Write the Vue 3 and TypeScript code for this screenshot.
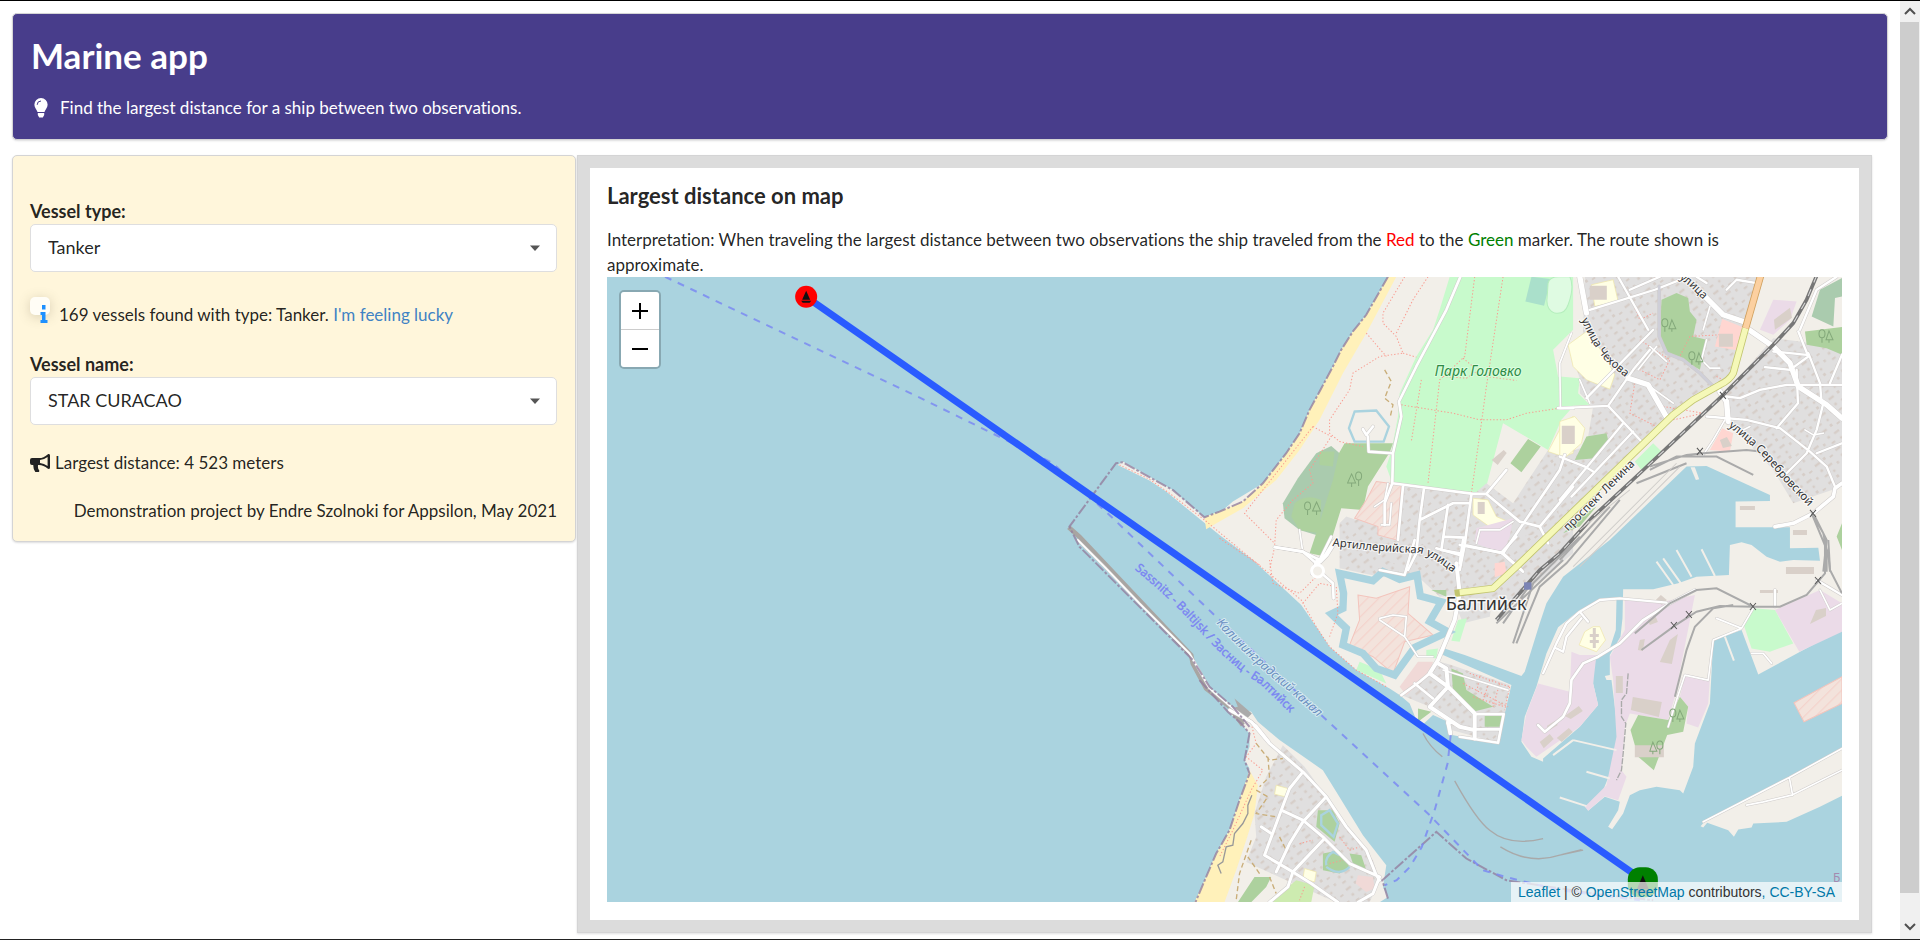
<script setup lang="ts">
import { ref } from 'vue'

type Frame = 'a' | 'b' | 'c' | 'd' | 'e'
interface Shape { f: Frame; k: string; d: string }
interface Road { f: Frame; w: number; d: string; k?: string }
interface Label { id: string; f: Frame; k: string; d: string; text: string }

const vesselTypes = ['Tanker', 'Cargo', 'Fishing', 'Passenger']
const vesselNames = ['STAR CURACAO', 'STAR MARIA', 'SUNNY STAR']
const vesselType = ref('Tanker')
const vesselName = ref('STAR CURACAO')

// Map sheets: each one is digitised at three units per pixel from its own origin.
const origin: Record<Frame, [number, number]> = {
  a: [1220, 270], b: [1560, 270], c: [1040, 440], d: [1380, 540], e: [1180, 680],
}
const place = (f: Frame): string => `translate(${origin[f][0]} ${origin[f][1]}) scale(0.33333)`

const areas: Shape[] = [
  { f: 'd', k: 'land', d: 'M25-789L-40-675-80-625-115-570-140-520-180-445-210-390-240-320-280-260-350-170-390-145-440-115-475-85-525-68-620-150-690-190-770-235-785-225-690-178-640-145-530-55-480-15-380 60-235 195-190 260-150 320-70 390 30 445 60 465 90 490 110 540 125 558 160 525 205 545 210 583 355 612 375 520 395 435 190 345 185 322 255 345 425 408 435 395 480 250 500 190 550 110 690 0 920-220 980-222 1170-135 1170-117 1067-115 1067-38 1230-38 1230 25 1315 23 1320 62 1240 60 1200 65 1160 50 1115 15 1085 7 1050 15 1047 105 950 110 895 130 820 148 730 148 728 235 722 290 690 345 690 405 675 408 680 420 695 420 715 580 690 700 670 750 620 800 625 812 675 770 720 785 715 810 685 860 697 867 730 820 750 765 780 750 830 740 900 750 910 760 940 680 945 610 990 490 1000 300 1085 270 1135 403 1390 265 1390-800Z' },
  { f: 'd', k: 'land', d: 'M728 175L660 180 600 210 535 262 500 340 470 440 435 530 425 605 455 650 490 665 490 655 600 560 655 495 640 430 640 360 690 325 708 270 710 180Z' },
  { f: 'd', k: 'land', d: 'M1390 625L1228 712 980 838 962 858 970 862 982 848 1045 870 1062 890 1075 868 1115 862 1120 850 1220 845 1320 800 1390 765Z' },
  { f: 'e', k: 'land', d: 'M215 95L235 125 300 180 430 270 470 335 550 465 620 555 610 620 625 650 600 666 45 666 80 590 110 520 150 450 180 360 205 290 210 265 195 240 210 200 210 160 185 130 145 95 160 80Z' },
  { f: 'a', k: 'beach', d: 'M505 21L440 135 400 185 365 240 340 290 300 365 270 420 240 490 200 550 130 640 70 695 40 708-45 742-40 778 0 755 70 715 170 630 240 540 300 450 370 310 440 190 530 21Z' },
  { f: 'e', k: 'beach', d: 'M210 270L235 315 225 400 200 480 170 570 135 666 45 666 80 590 110 520 150 450 180 360Z' },
  { f: 'a', k: 'park', d: 'M690 21L660 120 640 180 590 260 540 370 535 440 515 545 500 590 518 640 755 672 795 668 850 460 985 540 1025 450 1060 410 1060 360 1015 320 1000 240 1060 180 1060 21Z' },
  { f: 'b', k: 'park', d: 'M0 320L60 325 55 370 90 405 0 410ZM225 575L280 520 305 545 245 600Z' },
  { f: 'a', k: 'mint', d: 'M935 21L993 28 973 108 917 95Z' },
  { f: 'a', k: 'pitch', d: 'M985 40Q990 20 1020 21L1050 21Q1065 50 1045 105Q1035 135 1005 130Q978 120 982 85Z' },
  { f: 'a', k: 'scrub', d: 'M335 528L360 550 355 600 290 795 240 780 195 745 190 700 235 625 290 550Z' },
  { f: 'a', k: 'wood', d: 'M375 520L520 520 510 548 445 650 430 720 365 715 320 860 270 850 290 790 340 630 358 550ZM300 545L345 545 340 590 300 585ZM225 700Q260 670 305 690L300 790 240 780 215 740ZM925 507L963 530 905 607 872 580Z' },
  { f: 'a', k: 'town', d: 'M545 645L760 675 800 640 880 700 985 540 1060 560 1060 850 1000 900 860 1010 700 985 610 930 480 920 360 895 360 760 380 740 410 750Z' },
  { f: 'b', k: 'town', d: 'M75 21L600 21 545 200 520 320 420 370 0 770-20 560 80 530 100 410 60 370 60 325 30 240 70 190ZM640 205L720 215 846 240 846 650 700 700 640 600 500 450 495 370Z' },
  { f: 'd', k: 'town', d: 'M70 20L520-20 350 170 240 165 180 170 110 105 20 60ZM230 200L340 170 330 230 250 250Z' },
  { f: 'd', k: 'town', d: 'M180 365L215 375 390 435 375 520 355 608 215 570 205 540 150 500 65 465 110 420Z' },
  { f: 'e', k: 'town', d: 'M310 195L375 260 440 350 500 440 580 540 600 600 570 666 470 666 320 600 200 545 230 470 225 400 260 290Z' },
  { f: 'a', k: 'hatch', d: 'M470 635L545 645 530 810 475 795 475 770 405 745 440 690Z' },
  { f: 'a', k: 'school', d: 'M760 685L805 690 830 740 865 755 830 785 760 735ZM1060 440L1030 460 985 545 1030 560 1060 550Z' },
  { f: 'b', k: 'school', d: 'M95 45L160 30 175 95 105 110ZM80 185L25 225 40 290 80 330 150 358 165 315 130 250ZM0 455L45 440 75 475 65 520 20 560 0 560Z' },
  { f: 'e', k: 'school', d: 'M290 315L325 325 318 350 285 342ZM375 565L410 575 405 605 370 595Z' },
  { f: 'b', k: 'retail', d: 'M487 148L555 175 535 242 465 230ZM487 475L520 490 510 545 450 540Z' },
  { f: 'd', k: 'retail', d: 'M345 70L375 65 380 100 345 112Z' },
  { f: 'b', k: 'industry', d: 'M640 90L710 95 690 150 640 195 600 180Z' },
  { f: 'a', k: 'industry', d: 'M770 775L880 745 870 800 850 850 765 820Z' },
  { f: 'b', k: 'wood', d: 'M350 70L385 85 390 125 410 150 400 200 440 210 420 300 370 270 320 245 300 200 305 90ZM735 185L846 172 846 255 800 235 740 225ZM80 500L140 490 145 510 105 565 45 570ZM846 760L830 800 846 840ZM60 740L110 710 60 770 10 790Z' },
  { f: 'b', k: 'scrub', d: 'M846 25L780 60 755 140 820 170 825 85 846 80Z' },
  { f: 'd', k: 'industry', d: 'M475 430L570 455 575 335 600 345 650 345 640 430 655 495 600 560 470 650 440 620 425 600 440 520ZM735 180L850 185 945 165 885 470 865 540 750 520 735 560 725 690 740 710 715 780 675 768 625 812 615 800 680 735 710 590 700 420 690 350 735 270ZM915 410L990 415 985 490 955 562 920 550 925 500 900 470ZM1185 210L1320 150 1386 190 1386 275 1258 335Z' },
  { f: 'd', k: 'park', d: 'M1120 205L1185 210 1240 310 1170 335 1115 325 1090 250ZM235 240L262 235 240 305 215 302ZM140 330L175 325 170 355 140 350ZM-60 365L0 390 20 430-70 390Z' },
  { f: 'd', k: 'school', d: 'M640 260L660 260 677 300 650 335 598 315 615 275Z' },
  { f: 'd', k: 'wood', d: 'M775 525L865 540 900 470 925 500 910 575 862 585 822 690 775 650 752 570ZM215 385L250 400 260 450 340 500 280 515 220 450ZM315 525L370 525 365 560 315 560ZM115 505L155 515 115 545ZM155 150L200 150 200 170Z' },
  { f: 'd', k: 'hatch', d: 'M1386 410L1242 488 1272 545 1386 490Z' },
  { f: 'd', k: 'rosy', d: 'M60 440L115 365 160 365 150 405 80 465Z' },
  { f: 'e', k: 'wood', d: 'M415 390L460 390 480 430 465 485 410 440ZM225 590L275 590 260 620 215 666 175 666ZM510 520L545 525 560 570 520 550ZM430 520L480 510 510 560 480 580 430 570Z' },
  { f: 'e', k: 'meadow', d: 'M350 600L405 615 395 666 270 666Z' },
  { f: 'e', k: 'rosy', d: 'M535 585L580 590 585 625 560 635 528 610Z' },
  { f: 'e', k: 'rock', d: 'M165 55L217 100 190 128 145 85 175 80Z' },
  { f: 'd', k: 'hatch', d: 'M-65 165L-10 175 90 140 85 220 160 285 75 305 40 400-20 350-90 315-60 240Z' },
]

const waters: Shape[] = [
  { f: 'd', k: 'moat', d: 'M-120 100L-20 122 10 95 60 118 112 105 122 168 185 185 150 245 205 275 105 322 45 405-10 385-50 340-110 315-100 265-145 222-110 205-108 160Z' },
  { f: 'a', k: 'stream', d: 'M405 425L470 422 508 470 492 515 405 515 388 475Z' },
  { f: 'e', k: 'stream', d: 'M425 405L450 390 475 430 462 470 425 435ZM440 555Q435 530 460 515L480 525M440 560Q480 590 510 560' },
  { f: 'b', k: 'jetty', d: 'M392 592L405 592 418 628 408 630Z' },
]

const roads: Road[] = [
  { f: 'a', w: 8, d: 'M722 21L680 120 590 290 538 395 545 440 520 550 518 640 760 672 800 672 900 755 960 770 985 820M518 550L447 545 445 500M430 478L440 495 460 470M518 640L495 700 495 765M800 672L860 600M550 650L535 810M613 655L600 750 590 850 565 900M600 750L700 700 750 700M685 705L665 840 720 850M755 675L735 825 720 900M672 800L735 803M735 825L850 850 905 900M850 850L1020 600 1035 555M960 770L1060 650M165 832L250 845 300 870 335 800M1015 415L1060 415' },
  { f: 'a', w: 14, d: 'M300 875L320 855 345 815M295 870L280 910' },
  { f: 'a', w: 5, d: 'M465 710L495 690 505 640M485 765L510 765 515 700M240 780L248 835M770 820L780 780 840 780 880 755M1022 415L1020 280 1055 190' },
  { f: 'b', w: 7, d: 'M0 415L145 408 220 300 270 240M90 120L285 60 385 21M175 21L265 180M300 21L210 60M280 180L80 385M145 408L250 520M190 460L0 690M220 485L35 680M410 21L440 40M500 60L530 30 590 40M500 380L540 385 600 360 680 345 846 345M640 245L740 255M615 292L690 300 745 260 715 185M710 300L714 400 650 475M440 440L560 450 660 475 750 545M770 550L846 520M790 400L770 480 740 550 680 610M750 545L800 590 825 650M720 180L770 60 830 21M745 250L780 340 785 400M846 255L810 340M75 590L100 605M0 560L75 590' },
  { f: 'b', w: 16, d: 'M60 21L80 130M205 325L265 345 325 450M435 80L490 135 550 155 M560 175L640 230 690 280 715 350 800 405 846 445M480 365L500 395 505 455' },
  { f: 'b', w: 11, d: 'M846 640L825 655 820 680 760 730 700 760 645 770' },
  { f: 'b', w: 8, k: 'grey', d: 'M298 50L298 200 320 250 370 270 420 310 460 350' },
  { f: 'b', w: 5, d: 'M450 110L430 180M440 210L425 270 450 295 480 295M495 450L460 510 430 555M270 230L320 275M235 300L290 230M90 400L60 330M270 350L340 400M530 490L570 470M735 480L760 495 790 490' },
  { f: 'd', w: 12, d: 'M230 70L240 160 225 240 175 360 150 400 205 440 150 500 M150 500L240 560 285 570M175 370L200 385 205 440 285 520 285 595M205 545L212 580M215 545L205 550' },
  { f: 'd', w: 8, d: 'M285 522L372 522 355 608 240 590M285 568L360 568M65 465L120 425 150 400M105 430L160 475M0 90L75 105 105 0M170 25L240 45 M250 0L240 70M240 15L365 38 430 95M365 38L410-10' },
  { f: 'd', w: 7, d: 'M490 400L530 310 560 250 600 215 660 180 720 175 860 188M530 325L550 335 560 290 605 235 M600 215L625 245M1310 120L1386 165M1185 200L1185 150' },
  { f: 'd', w: 8, d: 'M475 555L495 575 550 530 570 490 575 420 610 370 655 350 720 310 790 240 870 190 945 150' },
  { f: 'd', w: 5, d: 'M865 560L890 480 915 405 985 420 1000 300 1085 265 1010 235M1115 340L1150 340 1175 370M1085 265L1120 205M1320 150L1350 210 1386 190M1386 625L1228 712 970 845M1100 795L1150 785 1235 765 1386 690M1228 712L1238 765M0 235L40 225 80 230 75 290 0 240M75 290L115 350 160 350M190 390L385 450' },
  { f: 'e', w: 9, d: 'M150 90L215 125 270 190 370 275 440 350 500 440 560 510 590 585 600 600M370 275L330 325 305 390 255 525 340 575 395 610 475 666M440 350L370 425 330 490 290 575M305 390L370 420 430 470 510 550 600 590M430 480L340 575 325 620 270 666M245 440L275 460M600 590L580 640 535 666' },
  { f: 'c', w: 8, d: 'M835 390L880 430 882 475M710 322L790 335 830 370' },
  { f: 'c', w: 5, d: 'M115 300L200 385 300 490 450 640 510 745 580 805 650 855 690 905' },
]

const buildings = [
  'M1590 286h17v14h-17ZM1719 334h14v13h-14ZM1562 426h13v18h-13ZM1635 745h29v12h-29Z',
  'M1670 640L1678 634 1672 664 1660 662ZM1633 697L1662 702 1659 717 1631 710ZM1786 567h28v7h-28ZM1816 610L1826 608 1826 616 1810 624ZM1593 628h3v20h-3ZM1590 634h9v3h-9ZM1590 640h9v3h-9Z',
  'M1720 440L1727 437 1732 446 1723 448ZM1774 320L1790 308 1792 318 1775 330ZM1478 502h7v12h-7ZM1492 460L1504 450 1507 453 1498 465ZM1616 676h7v17h-7ZM1740 506h15v4h-15ZM1793 530h14v5h-14ZM1540 742l10-8 4 5-10 9ZM1557 738l12-10 4 4-11 10ZM1565 716l14-10 4 5-12 8ZM1547 726l8-5 3 4-8 5ZM1656 600l5-5 6 5-5 5ZM1648 620l8-3 2 5-8 3ZM1640 640l5-1-2 12-5-1ZM1760 590h18v3h-18Z',
].join('')

const ticks = [
  'M1697 448l6 7m0-7l-6 7', 'M1720 392l6 7m0-7l-6 7', 'M1810 510l6 7m0-7l-6 7', 'M1815 577l6 7m0-7l-6 7',
  'M1750 603l6 7m0-7l-6 7', 'M1686 611l6 7m0-7l-6 7', 'M1671 622l6 7m0-7l-6 7',
].join('')

const woods = [
  'M1348 483l4-9 4 9ZM1352 483v4M1359 476m-3 0a3 4 0 1 0 6 0a3 4 0 1 0-6 0M1359 480v6',
  'M1313 511l4-9 4 9ZM1317 511v4M1308 506m-3 0a3 4 0 1 0 6 0a3 4 0 1 0-6 0M1308 510v5',
  'M1669 329l3-9 4 9ZM1672 329v3M1665 323m-3 0a3 4 0 1 0 6 0a3 4 0 1 0-6 0M1665 327v5',
  'M1696 362l3-9 4 9ZM1699 362v3M1692 356m-3 0a3 4 0 1 0 6 0a3 4 0 1 0-6 0M1692 360v5',
  'M1826 340l3-9 4 9ZM1829 340v3M1822 334m-3 0a3 4 0 1 0 6 0a3 4 0 1 0-6 0M1822 338v5',
  'M1650 751l3-9 4 9ZM1653 751v3M1660 745m-3 0a3 4 0 1 0 6 0a3 4 0 1 0-6 0M1660 749v5',
  'M1677 719l3-9 4 9ZM1680 719v3M1673 713m-3 0a3 4 0 1 0 6 0a3 4 0 1 0-6 0M1673 717v5',
].join('')

const labels: Label[] = [
  { id: 'p1', f: 'a', k: 'street', d: 'M338 828Q470 845 600 850Q650 862 730 935', text: 'Артиллерийская улица' },
  { id: 'p2', f: 'b', k: 'street', d: 'M64 150Q110 250 145 280L230 350', text: 'улица Чехова' },
  { id: 'p3', f: 'b', k: 'street', d: 'M358 26L390 50 450 110', text: 'улица' },
  { id: 'p4', f: 'b', k: 'street', d: 'M25 785L260 550', text: 'проспект Ленина' },
  { id: 'p5', f: 'b', k: 'street', d: 'M505 470Q600 540 660 620L780 745', text: 'улица Серебровской' },
  { id: 'p6', f: 'c', k: 'ferry-name', d: 'M285 388Q400 480 500 595Q590 690 660 730L830 895', text: 'Sassnitz - Baltijsk / Засниц - Балтийск' },
  { id: 'p7', f: 'c', k: 'canal-name', d: 'M530 550Q640 670 750 755L900 890', text: 'Калининградский канал' },
]
</script>

<template>
  <div class="window">
    <div class="page">
      <header class="banner">
        <h1>Marine app</h1>
        <p class="tagline">
          <svg class="bulb" viewBox="0 0 14 20" aria-hidden="true">
            <path d="M7 0a6.6 6.6 0 0 0-6.6 6.7c0 3 2.3 4.600 3.100 7.300h7c.8-2.700 3.100-4.300 3.100-7.300A6.600 6.600 0 0 0 7 0ZM3.800 15h6.400v2L8.800 19.400H5.200L3.800 17Z" />
            <path class="glint" d="M3.200 6.800A3.800 3.800 0 0 1 7 3" />
          </svg>
          <span>Find the largest distance for a ship between two observations.</span>
        </p>
      </header>

      <main class="columns">
        <form class="sidebar" @submit.prevent>
          <div class="field">
            <label for="type">Vessel type:</label>
            <div class="picker">
              <select id="type" v-model="vesselType">
                <option v-for="t in vesselTypes" :key="t">{{ t }}</option>
              </select>
              <svg class="caret" viewBox="0 0 10 6" aria-hidden="true"><path d="M0 .5h10L5 6Z" /></svg>
            </div>
          </div>

          <p class="found">
            <span class="info">
              <svg viewBox="0 0 8 18" aria-hidden="true"><path d="M2 0h3.500v4.500H2ZM.5 7h5v8H7.500v3H.5v-3H2v-5H.5Z" /></svg>
            </span>
            <span>169 vessels found with type: Tanker. <a href="#">I'm feeling lucky</a></span>
          </p>

          <div class="field">
            <label for="name">Vessel name:</label>
            <div class="picker">
              <select id="name" v-model="vesselName">
                <option v-for="n in vesselNames" :key="n">{{ n }}</option>
              </select>
              <svg class="caret" viewBox="0 0 10 6" aria-hidden="true"><path d="M0 .5h10L5 6Z" /></svg>
            </div>
          </div>

          <p class="distance">
            <svg class="horn" viewBox="0 0 20 18" aria-hidden="true">
              <path fill-rule="evenodd" d="M19 0q-.8-.2-1.400.400-4 3.600-8.600 3.600H2Q0 4 0 6v3q0 2 2 2h1.300q-.2 4 2 7h3.400q1-.8.400-1.800-1.600-2-1-5.200h.9q4.600 0 8.600 3.600.6.600 1.400.400 1-.2 1-1.400V9.200q1-.600 1-1.700t-1-1.700V1.400Q20 .2 19 0ZM17.600 3v9q-3.600-2.700-7.600-3.100V6.100q4-.4 7.600-3.100Z" />
            </svg>
            <span>Largest distance: 4 523 meters</span>
          </p>
          <p class="credit">Demonstration project by Endre Szolnoki for Appsilon, May 2021</p>
        </form>

        <section class="panel">
          <div class="sheet">
            <h2>Largest distance on map</h2>
            <p class="note">
              Interpretation: When traveling the largest distance between two observations the ship traveled from the
              <span class="red">Red</span> to the <span class="green">Green</span> marker. The route shown is approximate.
            </p>

            <div class="map">
              <svg class="chart" viewBox="608 277 1234 625" preserveAspectRatio="xMidYMid slice" role="img" aria-label="Route map">
                <defs>
                  <pattern id="houses" width="78" height="66" patternUnits="userSpaceOnUse" patternTransform="rotate(-38)">
                    <rect width="78" height="66" fill="#e0dfdf" />
                    <path d="M6 8h18v7H6ZM38 6h8v8H38ZM58 14h11v6H58ZM10 30h8v8H10ZM34 32h18v7H34ZM64 40h7v8h-7ZM10 52h12v6H10ZM40 54h7v7h-7Z" fill="#d6cdc7" />
                  </pattern>
                  <pattern id="stripes" width="24" height="24" patternUnits="userSpaceOnUse" patternTransform="rotate(45)">
                    <rect width="24" height="24" fill="#f3e3dc" />
                    <path d="M2 0v24" stroke="#f5d0c9" stroke-width="3" />
                  </pattern>
                  <path v-for="l in labels" :id="l.id" :key="l.id" :d="l.d" />
                </defs>

                <rect x="0" y="0" width="2600" height="1200" fill="#aad3df" />
                <path v-for="(s, i) in areas" :key="`s${i}`" :class="s.k" :d="s.d" :transform="place(s.f)" />
                <path v-for="(s, i) in waters" :key="`w${i}`" :class="s.k" :d="s.d" :transform="place(s.f)" />

                <path class="tracks" :transform="place('a')" d="M555 21L490 130 490 160 530 200 550 250 480 260 400 310 390 360 330 450 330 490 360 515 430 530M625 21L580 90 530 190M440 190L500 260M550 250L590 262M765 21L735 260 660 330 625 640M850 21L800 350 785 460 755 670M545 405L700 430 780 450 860 450 920 430 1020 415M605 330L575 515M670 320L740 325 780 300M800 320L890 332M730 265L760 290M280 470L75 730 165 820M280 470L335 500 270 600 280 640 220 690 170 750 165 832 150 900M0 805L120 885" />
                <path class="tracks" :transform="place('c')" d="M240 75L330 118 390 160 495 240 640 360 785 480 830 560 870 620 950 690 1040 740M690 360L700 430 780 460 840 400M790 490L840 430 890 440 895 520 870 590" />
                <path class="tracks" :transform="place('b')" d="M205 70L240 150 280 130M240 210L330 270 300 330 240 300M225 340L210 430 290 470M310 410L430 430 340 450M480 195L390 200 360 260M240 50L290 21M470 320L490 330" />
                <path class="tracks" :transform="place('d')" d="M0 240L75 290M250 430L385 500M270 400L390 440M280 470L375 500M330 420L310 480M360 430L340 500M390 440L375 510M300 410L290 460" />
                <path class="tracks" :transform="place('e')" d="M215 130L230 190 200 230 250 270 215 330 160 450 120 530M480 470L510 510 540 500M360 490L400 480M450 550L490 540M375 620L360 660" />
                <path class="dirt" :transform="place('e')" d="M230 190L270 240 310 235M230 330L265 350 230 400 290 410M215 480L180 580 170 660M265 230L270 290 240 320M300 470L320 510M270 590L290 640M240 580L205 530" />
                <path class="dirt" :transform="place('a')" d="M495 300L515 335 495 385 520 405 512 440" />
                <path class="groyne" :transform="place('e')" d="M217 345L205 375 205 400 190 430 165 460 160 495 140 500 130 545 115 555 125 580" />
                <path class="building" :d="buildings" />

                <path class="mole" :transform="place('c')" d="M88 262L120 290 455 645 460 670 500 745 570 800 610 855" />

                <path v-for="(r, i) in roads" :key="`c${i}`" class="casing" :d="r.d" :transform="place(r.f)" :stroke-width="r.w + 3" />
                <path v-for="(r, i) in roads" :key="`r${i}`" :class="['road', r.k]" :d="r.d" :transform="place(r.f)" :stroke-width="r.w" />
                <circle class="roundabout" cx="1318" cy="571" r="6" />

                <g :transform="place('b')" class="avenue">
                  <path class="edge" d="M557 175L520 310Q510 330 480 345L400 390 340 435-130 890-200 955-315 970" />
                  <path class="core" d="M557 175L520 310Q510 330 480 345L400 390 340 435-130 890-200 955-300 967" />
                  <path class="edge primary-edge" d="M602 18L557 175" />
                  <path class="core primary" d="M602 18L557 175" />
                </g>
                <g :transform="place('b')">
                  <path class="rail" d="M770 18L740 90 700 160 640 225 490 375 240 610 100 740 0 850-60 900-190 1050" />
                  <path class="rail-gap" d="M770 18L740 90 700 160 640 225 490 375 240 610 100 740 0 850-60 900-190 1050" />
                  <path class="siding" d="M270 590L380 555 430 550 560 540 600 545M270 600L350 560 470 560 580 615M230 640L380 580M150 710L0 870M180 690L20 880 -60 950-130 1120M60 800L-100 960-170 1060M10 870L-190 1060M755 730L790 790 800 840 800 905M755 730L780 790 805 850 810 905M765 740L800 810 790 905" />
                  <path class="thin" d="M360 590L60 890M350 580L40 890M210 660L60 780" />
                </g>
                <g :transform="place('d')">
                  <path class="siding" d="M765 280L870 190 950 150 1010 145 1120 200 1200 200 1280 165 1335 100 1335 0M785 330L885 257 950 215 1020 198 1120 200M885 470L920 330 945 260 1000 205 1060 195M1345 0L1350 90 1386 160M460 130L400 310" />
                  <path class="fence" d="M745 400L740 460 725 480 725 530 738 550 730 640 725 690 710 720" />
                  <path class="quay" d="M580 600L710 630M580 600L520 645M620 695L690 715M540 772L620 798M890 30L935 110M850 55L910 140M830 65L880 135M965 28L1005 108M1035 290L1062 362" />
                  <path class="reef" d="M225 722Q290 840 330 870Q390 920 490 895M362 920Q450 975 540 945L610 930M130 580Q150 620 188 650M545 943L605 928" />
                  <rect x="433" y="127" width="22" height="22" fill="#7b83b4" />
                </g>
                <path class="tick" :d="ticks" />
                <path class="tree" :d="woods" />

                <path class="border" :transform="place('a')" d="M505 21L440 135 400 185 365 240 340 290 300 365 270 420 240 490 200 550 130 640 70 695 0 725-45 742-140 660-210 622-290 577-310 580-450 770-420 830-80 1170-30 1250 40 1310 90 1370" />
                <path class="border" :transform="place('e')" d="M60 0L145 95 185 130 210 160 195 240 210 280 180 360 150 450 110 520 80 590 48 666M625 655L608 600 770 455 860 535 980 600 1240 640 1420 660" />

                <path class="ferry" d="M666 277L925 400 1053 463 1110 515 1217 617 1327 720 1430 815 1483 870 1507 877 1560 890 1640 900M1451 735L1448 763 1435 810 1422 847 1410 867 1397 880 1385 885" />

                <text v-for="l in labels" :key="`t${l.id}`" :class="l.k" :transform="place(l.f)"><textPath :href="`#${l.id}`">{{ l.text }}</textPath></text>
                <text class="park-name" x="1435" y="376">Парк Головко</text>
                <text class="city" x="1446" y="610">Балтийск</text>
                <text class="bay" x="1833" y="882">Б</text>

                <path class="route" d="M807 297L1643 880" />
                <g class="pin">
                  <circle cx="807" cy="297" r="11" fill="#f00" />
                  <path d="M807 291l4 9h-8ZM802 301h10l-1.500 2h-7Z" />
                </g>
                <g class="pin">
                  <rect x="1628" y="867" width="30" height="30" rx="12" fill="green" />
                  <path d="M1643 875l6 14h-12ZM1635 890h15l-2 3h-11Z" />
                </g>
              </svg>

              <div class="zoom">
                <button type="button" aria-label="Zoom in"><svg viewBox="0 0 16 16"><path d="M0 8h16M8 0v16" /></svg></button>
                <button type="button" aria-label="Zoom out"><svg viewBox="0 0 16 16"><path d="M0 8h16" /></svg></button>
              </div>
              <div class="credits">
                <a href="#">Leaflet</a> | © <a href="#">OpenStreetMap</a> contributors<span class="tint">,</span> <a href="#">CC-BY-SA</a>
              </div>
            </div>
          </div>
        </section>
      </main>
    </div>

    <div class="scroller" aria-hidden="true">
      <svg viewBox="0 0 20 21"><path d="M5 13l5-5 5 5" /></svg>
      <div class="thumb"></div>
      <svg class="down" viewBox="0 0 20 21"><path d="M5 6l5 5 5-5" /></svg>
    </div>
  </div>
</template>

<style>
body { margin: 0; }
</style>

<style scoped>
* { box-sizing: border-box; }
.window {
  display: flex;
  height: 100vh;
  overflow: hidden;
  border-top: 1px solid #000;
  border-bottom: 1px solid #222;
  background: #fff;
  color: rgba(0, 0, 0, 0.87);
  font: 17px/25px Lato, "Noto Sans", sans-serif;
  font-variant-ligatures: none;
}
.page { flex: 1; min-width: 0; padding: 12px 12px 0; }
h1, h2, p { margin: 0; }
a { color: #4183c4; text-decoration: none; }
.banner {
  height: 127px;
  padding: 19px 18px;
  border: 1px solid #d4d4d5;
  border-radius: 5px;
  background: #483d8b;
  color: #fff;
  box-shadow: 0 1px 2px rgba(34, 36, 38, 0.15);
}
h1 { font-size: 35px; line-height: 45px; font-weight: 700; }
.tagline { display: flex; align-items: center; margin-top: 17px; }
.bulb { width: 14px; height: 20px; margin: 0 12px 0 3px; fill: #fff; }
.glint { fill: none; stroke: #483d8b; stroke-width: 1; }
.columns { display: flex; align-items: flex-start; gap: 1px; margin-top: 15px; padding-right: 16px; }
.sidebar {
  flex: 0 0 564px;
  height: 387px;
  padding: 43px 18px 0 17px;
  border: 1px solid #d4d4d5;
  border-radius: 5px;
  background: #fff6db;
  box-shadow: 0 1px 2px rgba(34, 36, 38, 0.15);
}
.field label { display: block; font-size: 18px; font-weight: 700; }
.picker { position: relative; }
.picker select {
  display: block;
  width: 100%;
  height: 48px;
  padding: 0 17px 2px;
  border: 1px solid #dededf;
  border-radius: 5px;
  background: #fff;
  color: inherit;
  font: inherit;
  font-size: 18px;
  appearance: none;
}
.caret { position: absolute; right: 17px; top: 21px; width: 10px; height: 6px; fill: #555; pointer-events: none; }
.found { display: flex; align-items: center; height: 80px; padding-top: 4px; }
.info {
  display: flex;
  width: 20px;
  height: 18px;
  margin: -17px 9px 0 0;
  padding: 8px 0 0 10px;
  border-radius: 5px;
  background: #fffdf6;
  box-shadow: 0 2px 12px rgba(100, 90, 60, 0.25);
}
.info svg { flex: none; width: 8px; height: 18px; fill: #1e90ff; }
.distance { display: flex; align-items: center; gap: 5px; margin-top: 25px; }
.horn { width: 20px; height: 18px; fill: #222; }
.credit { margin-top: 23px; text-align: right; white-space: nowrap; }
.panel {
  flex: 1;
  min-width: 0;
  padding: 12px;
  border: 1px solid #d4d4d5;
  background: #dcdcdc;
  box-shadow: 0 1px 2px rgba(34, 36, 38, 0.15);
}
.sheet { padding: 14px 17px 18px; background: #fff; }
h2 { font-size: 22px; line-height: 28px; font-weight: 700; }
.note { margin-top: 17px; padding-right: 48px; }
.red { color: #f00; }
.green { color: green; }
.map { position: relative; height: 625px; overflow: hidden; }
.chart { display: block; width: 100%; height: 100%; }
.zoom {
  position: absolute;
  left: 12px;
  top: 13px;
  border: 2px solid rgba(0, 0, 0, 0.2);
  border-radius: 5px;
  background-clip: padding-box;
}
.zoom button {
  display: flex;
  align-items: center;
  justify-content: center;
  width: 38px;
  height: 37px;
  padding: 0;
  border: 0;
  background: #fff;
}
.zoom button:first-child { height: 38px; border-bottom: 1px solid #ccc; border-radius: 3px 3px 0 0; }
.zoom button:last-child { border-radius: 0 0 3px 3px; }
.zoom svg { width: 16px; height: 16px; stroke: #000; stroke-width: 2; }
.credits {
  position: absolute;
  right: 0;
  bottom: 0;
  padding: 0 7px;
  background: rgba(255, 255, 255, 0.7);
  color: #333;
  font: 14px/20px "Liberation Sans", Arial, sans-serif;
}
.credits a, .tint { color: #0078a8; }
.scroller { display: flex; flex-direction: column; flex: 0 0 20px; background: #f0f0f0; }
.scroller svg { flex: none; width: 20px; height: 21px; fill: none; stroke: #505050; stroke-width: 2; }
.thumb { flex: 0 1 871px; width: 19px; background: #cdcdcd; }
.down { margin-top: auto; }

.land { fill: #f2efe9; }
.beach { fill: #fff1ba; }
.park { fill: #c8facc; }
.meadow { fill: #cdebb0; }
.mint { fill: #aae0cb; }
.pitch { fill: #dffbe2; stroke: #b5eebd; stroke-width: 3; }
.scrub { fill: #aacbae; }
.wood { fill: #add19e; }
.town { fill: url(#houses); }
.hatch { fill: url(#stripes); stroke: #f3c4bc; stroke-width: 3; }
.rosy { fill: #f0d9d7; }
.school { fill: #ffffe5; stroke: #efe6a6; stroke-width: 2; }
.retail { fill: #ffd6d1; }
.industry { fill: #ebdbe8; }
.rock { fill: #aaa; }
.jetty { fill: #f2efe9; }
.moat { fill: none; stroke: #aad3df; stroke-width: 22; }
.stream { fill: none; stroke: #aad3df; stroke-width: 7; }
.tracks { fill: none; stroke: #fa9a8f; stroke-width: 3; stroke-dasharray: 4 6; }
.dirt { fill: none; stroke: #c9ad78; stroke-width: 4; stroke-dasharray: 15 9; }
.groyne { fill: none; stroke: #999; stroke-width: 4; }
.building { fill: #d9d0c9; }
.mole { fill: none; stroke: #a8a5a2; stroke-width: 14; }
.casing { fill: none; stroke: #cfcccb; stroke-linecap: round; stroke-linejoin: round; }
.road { fill: none; stroke: #fff; stroke-linecap: round; stroke-linejoin: round; }
.road.grey { stroke: #cfcfd8; }
.roundabout { fill: #f2efe9; stroke: #fff; stroke-width: 3; }
.avenue path { fill: none; stroke-linejoin: round; }
.avenue .edge { stroke: #c2c56f; stroke-width: 22; }
.avenue .core { stroke: #f5f8b8; stroke-width: 17; }
.avenue .primary-edge { stroke: #d0a05e; }
.avenue .primary { stroke: #fcd0a0; }
.rail { fill: none; stroke: #777; stroke-width: 11; }
.rail-gap { fill: none; stroke: #ddd; stroke-width: 3; stroke-dasharray: 22 22; }
.siding { fill: none; stroke: #aaa; stroke-width: 6; }
.thin { fill: none; stroke: #d0cdca; stroke-width: 3; }
.fence { fill: none; stroke: #aaa; stroke-width: 4; stroke-dasharray: 18 4; }
.quay { fill: none; stroke: #f2efe9; stroke-width: 6; }
.reef { fill: none; stroke: #a9a9a9; stroke-width: 4; }
.tick { fill: none; stroke: #555; stroke-width: 1; }
.tree { fill: none; stroke: #83a87a; stroke-width: 1; }
.border { fill: none; stroke: #937f9f; stroke-width: 6; stroke-dasharray: 34 6 8 6; opacity: 0.8; }
.ferry { fill: none; stroke: #7b89f2; stroke-width: 2; stroke-dasharray: 7 7; opacity: 0.85; }
text { font-family: "Noto Sans", sans-serif; paint-order: stroke; stroke-linejoin: round; }
.street { font-size: 34px; fill: #333; stroke: rgba(255, 255, 255, 0.7); stroke-width: 7; }
.ferry-name { font-size: 36px; fill: #7a84f2; stroke: #7a84f2; stroke-width: 1; }
.canal-name { font-size: 37px; font-style: italic; fill: #6a90bf; stroke: rgba(225, 240, 245, 0.8); stroke-width: 6; }
.park-name { font-size: 14px; font-style: italic; fill: #2e8b46; stroke: rgba(225, 255, 228, 0.8); stroke-width: 2; }
.city { font-size: 18px; fill: #333; stroke: rgba(255, 255, 255, 0.7); stroke-width: 3; }
.bay { font-size: 12px; fill: #a48ab0; }
.route { fill: none; stroke: #2a5bff; stroke-width: 7; }
.pin path { fill: #111; }
</style>
